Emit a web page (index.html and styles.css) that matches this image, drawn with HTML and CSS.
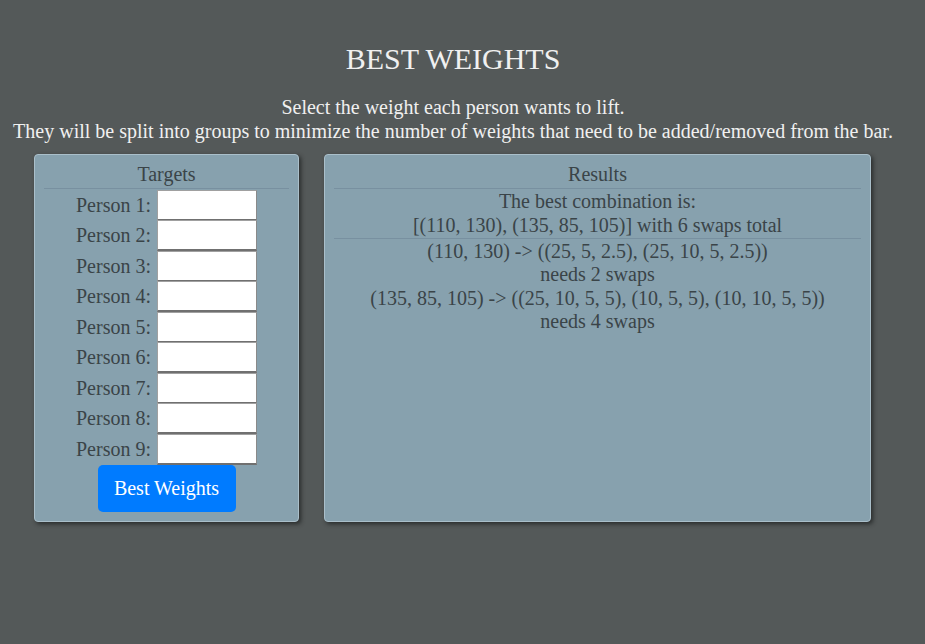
FILE: index.html
```html
<!DOCTYPE html>
<html>
<head>
<meta charset="utf-8">
<link rel="stylesheet" href="styles.css">
</head>
<body>
<div class="page">
<h1 class="title">BEST WEIGHTS</h1>
<p class="intro">Select the weight each person wants to lift.<br>They will be split into groups to minimize the number of weights that need to be added/removed from the bar.</p>
<div class="panels">
  <div class="panel targets">
    <div class="panel-head">Targets</div>
    <div class="form">
      <div class="row"><label>Person 1:</label><input type="text"></div>
      <div class="row"><label>Person 2:</label><input type="text"></div>
      <div class="row"><label>Person 3:</label><input type="text"></div>
      <div class="row"><label>Person 4:</label><input type="text"></div>
      <div class="row"><label>Person 5:</label><input type="text"></div>
      <div class="row"><label>Person 6:</label><input type="text"></div>
      <div class="row"><label>Person 7:</label><input type="text"></div>
      <div class="row"><label>Person 8:</label><input type="text"></div>
      <div class="row"><label>Person 9:</label><input type="text"></div>
    </div>
    <button class="btn">Best Weights</button>
  </div>
  <div class="panel results">
    <div class="panel-head">Results</div>
    <div class="summary">
      <div>The best combination is:</div>
      <div>[(110, 130), (135, 85, 105)] with 6 swaps total</div>
    </div>
    <div class="groups">
      <div>(110, 130) -&gt; ((25, 5, 2.5), (25, 10, 5, 2.5))</div>
      <div>needs 2 swaps</div>
      <div>(135, 85, 105) -&gt; ((25, 10, 5, 5), (10, 5, 5), (10, 10, 5, 5))</div>
      <div>needs 4 swaps</div>
    </div>
  </div>
</div>
</div>
</body>
</html>
```

FILE: styles.css
```css
html, body {
  margin: 0;
  padding: 0;
}
body {
  background: #545959;
  font-family: "Liberation Serif", "Times New Roman", serif;
  font-size: 20px;
  color: #3a4448;
  height: 644px;
  overflow: hidden;
}
.page {
  width: 906px;
}
.title {
  margin: 0;
  padding-top: 42px;
  font-size: 30px;
  font-weight: normal;
  line-height: 34px;
  text-align: center;
  color: #f0f0f0;
}
.intro {
  margin: 19px 0 0;
  text-align: center;
  color: #f0f0f0;
  line-height: 24px;
}
.panels {
  display: flex;
  gap: 25px;
  margin-top: 11px;
  padding-left: 34px;
}
.panel {
  background: #87a1ae;
  border: 1px solid #aabfca;
  border-radius: 4px;
  box-shadow: 2px 2px 4px rgba(30, 32, 32, 0.8);
  padding: 8px 9px 9px;
  box-sizing: border-box;
  height: 368px;
}
.targets {
  width: 265px;
  display: flex;
  flex-direction: column;
  align-items: center;
}
.results {
  width: 547px;
  text-align: center;
}
.panel-head {
  align-self: stretch;
  text-align: center;
  line-height: 23px;
  padding-bottom: 2px;
  border-bottom: 1px solid #7890a0;
}
.form {
  margin-top: 1px;
  display: flex;
  flex-direction: column;
}
.row {
  display: flex;
  align-items: center;
  height: 30.5px;
}
.row label {
  width: 75px;
  text-align: right;
  margin-right: 6px;
}
.row input {
  box-sizing: border-box;
  width: 100px;
  height: 31px;
  margin: 0;
  background: #fff;
  border-top: 1px solid #a0a0a0;
  border-left: 1px solid #a0a0a0;
  border-right: 1px solid #8a8a8a;
  border-bottom: 2px solid #707070;
  font-size: 16px;
}
.btn {
  flex-shrink: 0;
  margin-top: 0;
  width: 138px;
  height: 47px;
  background: #007bff;
  color: #fff;
  border: none;
  border-radius: 5px;
  font-family: "Liberation Serif", "Times New Roman", serif;
  font-size: 20px;
  cursor: pointer;
}
.summary {
  line-height: 24px;
  padding-bottom: 1px;
  border-bottom: 1px solid #7890a0;
}
.groups {
  padding-top: 1px;
  line-height: 23.4px;
}
```
